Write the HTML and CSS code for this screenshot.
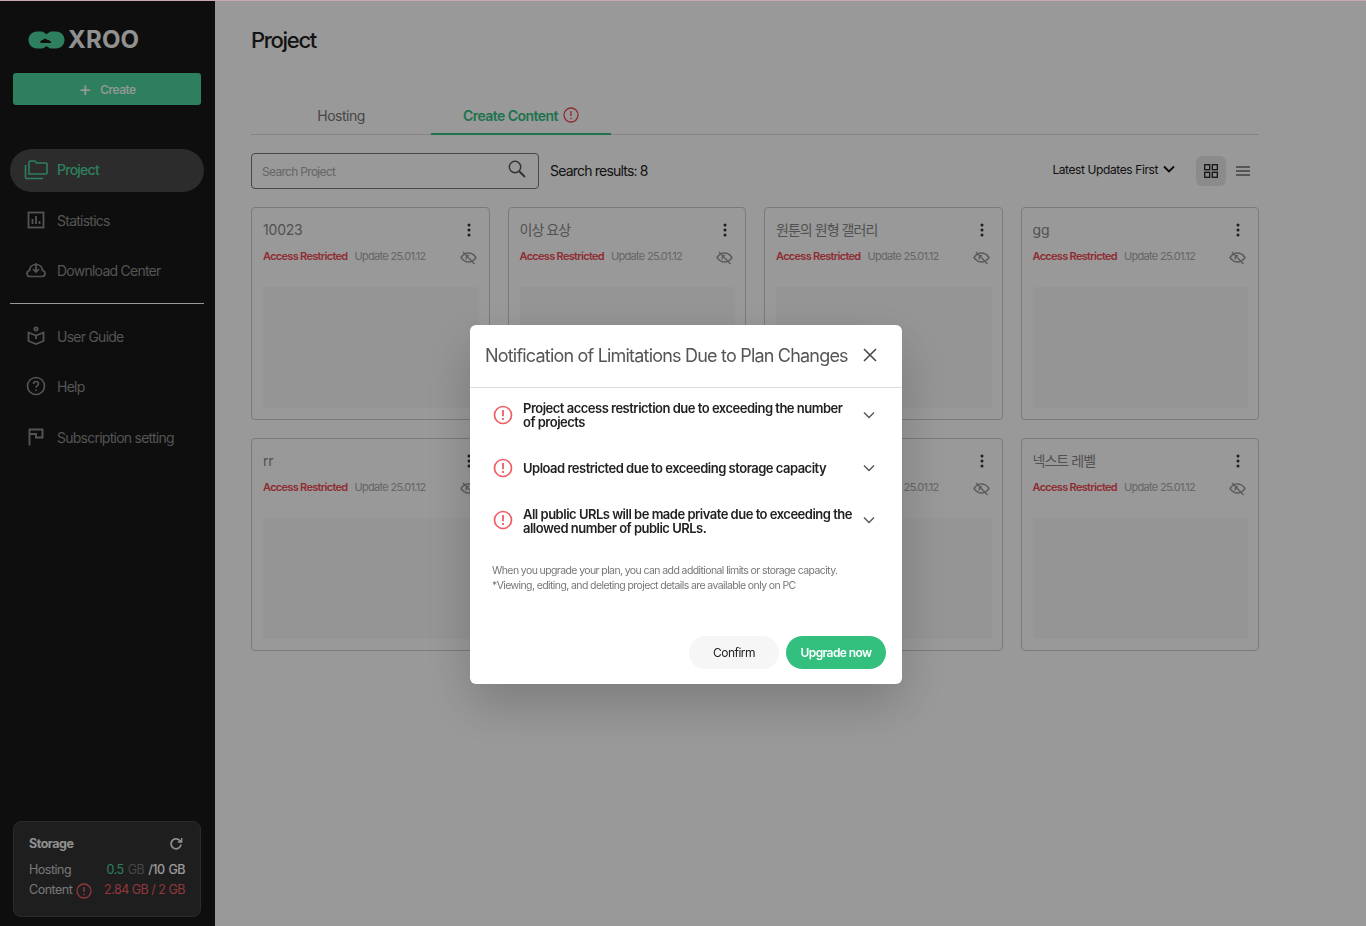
FILE: index.html
```html
<!DOCTYPE html>
<html lang="en">
<head>
    <meta charset="UTF-8">
    <meta name="viewport" content="width=device-width, initial-scale=1.0">
    <title>XROO - Project</title>
    <link rel="stylesheet" href="styles.css">
</head>
<body>
    <div class="app">
        <aside class="sidebar">
            <div class="logo">
                <svg class="logo-mark" width="37" height="18" viewBox="0 0 37 18">
                    <path d="M9 0.500H14C16 0.500 16.800 3 18.500 3C20.200 3 21 0.500 23 0.500H28C33 0.500 36.500 4.500 36.500 9C36.500 13.500 33 17.500 28 17.500H23C21 17.500 20.200 15.500 18.500 15.500C16.800 15.500 16 17.500 14 17.500H9C4 17.500 0.500 13.500 0.500 9C0.500 4.500 4 0.500 9 0.500Z" fill="#4dd49b"/>
                    <path d="M13.500 12C12 12 11.800 10.300 13 9.800C13.300 9 14.300 8.800 14.900 9.200C15.700 7.300 18.500 7.300 19.300 9.100C20.500 8.700 21.700 9.300 21.800 10.200C23.500 10.200 23.800 12 22.500 12Z" fill="#181818"/>
                </svg>
                <span class="logo-text">XROO</span>
            </div>
            <button class="create-btn"><span class="plus">+</span>Create</button>

            <nav class="nav">
                <a class="nav-item active">
                    <svg width="24" height="20" viewBox="0 0 24 20" fill="none" stroke="currentColor" stroke-width="1.600"><path d="M5 5V2.500C5 1.500 5.500 1 6.500 1H11L12.500 3H22C22.800 3 23 3.500 23 4V13C23 13.800 22.500 14 22 14H5Z"/><path d="M1.500 5V17.500C1.500 18 2 18.500 2.500 18.500H19"/></svg>
                    Project
                </a>
                <a class="nav-item">
                    <svg width="18" height="18" viewBox="0 0 18 18" fill="none" stroke="currentColor" stroke-width="1.800"><rect x="1.500" y="1.500" width="15" height="15"/><path d="M5.500 13V8M9 13V5M12.500 13V10"/></svg>
                    Statistics
                </a>
                <a class="nav-item">
                    <svg width="20" height="18" viewBox="0 0 20 18" fill="none" stroke="currentColor" stroke-width="1.700"><path d="M5 15.500H4C2 15.500 1 14 1 12.500C1 11 2 9.800 3.500 9.500C3.800 6 6.500 3.500 10 3.500C13.500 3.500 16.200 6 16.500 9.500C18 9.800 19 11 19 12.500C19 14 18 15.500 16 15.500Z"/><path d="M10 2V10.500M7 8L10 11L13 8"/></svg>
                    Download Center
                </a>
                <div class="nav-divider"></div>
                <a class="nav-item">
                    <svg width="18" height="20" viewBox="0 0 18 20" fill="none" stroke="currentColor" stroke-width="1.800"><circle cx="9" cy="3" r="1.700"/><path d="M1.500 6.500L9 9.500L16.500 6.500V15L9 18L1.500 15Z"/><path d="M9 9.500V13"/></svg>
                    User Guide
                </a>
                <a class="nav-item">
                    <svg width="20" height="20" viewBox="0 0 20 20" fill="none" stroke="currentColor" stroke-width="1.600"><circle cx="10" cy="10" r="8.500"/><path d="M7.500 8C7.500 6.500 8.600 5.500 10 5.500C11.500 5.500 12.500 6.500 12.500 7.800C12.500 9.500 10 9.800 10 11.800"/><path d="M10 13.500V15"/></svg>
                    Help
                </a>
                <a class="nav-item">
                    <svg width="16" height="18" viewBox="0 0 16 18" fill="none" stroke="currentColor" stroke-width="1.900"><path d="M1.500 17.500V1.500H14.500V9.500H8V6H1.500"/></svg>
                    Subscription setting
                </a>
            </nav>

            <div class="storage">
                <div class="storage-head">
                    <span>Storage</span>
                    <svg width="14" height="14" viewBox="0 0 14 14" fill="none" stroke="currentColor" stroke-width="1.800"><path d="M12 7.500A5 5 0 1 1 10.500 3.200L12.500 4.800"/><path d="M12.700 1V5H8.800" stroke-width="1.400"/></svg>
                </div>
                <div class="storage-row">
                    <span>Hosting</span>
                    <span class="storage-val"><em class="green">0.5</em> <em class="dim">GB</em> <b>/10 GB</b></span>
                </div>
                <div class="storage-row">
                    <span class="storage-label">Content
                        <svg class="warn-icon" width="16" height="16" viewBox="0 0 16 16"><circle cx="8" cy="8" r="7" fill="none" stroke="currentColor" stroke-width="1.300"/><path d="M8 4V9M8 10.800V12.300" stroke="currentColor" stroke-width="1.400"/></svg>
                    </span>
                    <span class="storage-val red"><em>2.84</em> <em>GB</em> / 2 GB</span>
                </div>
            </div>
        </aside>

        <main class="main">
            <h1 class="page-title">Project</h1>
            <div class="tabs">
                <div class="tab">Hosting</div>
                <div class="tab active">Create Content
                    <svg class="warn-icon" width="16" height="16" viewBox="0 0 16 16"><circle cx="8" cy="8" r="7" fill="none" stroke="currentColor" stroke-width="1.300"/><path d="M8 4V9M8 10.800V12.300" stroke="currentColor" stroke-width="1.400"/></svg>
                </div>
            </div>

            <div class="toolbar">
                <div class="search">
                    <span>Search Project</span>
                    <svg width="18" height="18" viewBox="0 0 18 18" fill="none" stroke="#555" stroke-width="1.500"><circle cx="7" cy="7" r="5.700"/><path d="M11.200 11.200L17 17" stroke-width="2"/></svg>
                </div>
                <div class="result-count">Search results: 8</div>
                <div class="sort">Latest Updates First
                    <svg width="12" height="8" viewBox="0 0 12 8" fill="none" stroke="#111" stroke-width="1.800"><path d="M1 1.500L6 6.500L11 1.500"/></svg>
                </div>
                <div class="view-btn selected">
                    <svg width="14" height="14" viewBox="0 0 14 14" fill="none" stroke="#222" stroke-width="1.300"><rect x="0.700" y="0.700" width="5" height="5"/><rect x="8.300" y="0.700" width="5" height="5"/><rect x="0.700" y="8.300" width="5" height="5"/><rect x="8.300" y="8.300" width="5" height="5"/></svg>
                </div>
                <div class="view-btn">
                    <svg width="14" height="10" viewBox="0 0 14 10" fill="none" stroke="#222" stroke-width="1.200"><path d="M0 1H14M0 5H14M0 9H14"/></svg>
                </div>
            </div>

            <div class="card-grid" id="cardGrid"></div>
        </main>
    </div>

    <div class="overlay">
        <div class="modal">
            <div class="modal-head">
                <span>Notification of Limitations Due to Plan Changes</span>
                <svg width="14" height="14" viewBox="0 0 14 14" fill="none" stroke="#444" stroke-width="1.500"><path d="M1 1L13 13M13 1L1 13"/></svg>
            </div>
            <div class="modal-body">
                <div class="notice">
                    <svg class="notice-icon" width="20" height="20" viewBox="0 0 20 20"><circle cx="10" cy="10" r="8.500" fill="none" stroke="currentColor" stroke-width="1.700"/><path d="M10 5V11.200M10 13V15" stroke="currentColor" stroke-width="1.800"/></svg>
                    <div class="notice-text">Project access restriction due to exceeding the number of projects</div>
                    <svg class="notice-arrow" width="12" height="8" viewBox="0 0 12 8" fill="none" stroke="#555" stroke-width="1.400"><path d="M1 1.500L6 6.500L11 1.500"/></svg>
                </div>
                <div class="notice">
                    <svg class="notice-icon" width="20" height="20" viewBox="0 0 20 20"><circle cx="10" cy="10" r="8.500" fill="none" stroke="currentColor" stroke-width="1.700"/><path d="M10 5V11.200M10 13V15" stroke="currentColor" stroke-width="1.800"/></svg>
                    <div class="notice-text">Upload restricted due to exceeding storage capacity</div>
                    <svg class="notice-arrow" width="12" height="8" viewBox="0 0 12 8" fill="none" stroke="#555" stroke-width="1.400"><path d="M1 1.500L6 6.500L11 1.500"/></svg>
                </div>
                <div class="notice">
                    <svg class="notice-icon" width="20" height="20" viewBox="0 0 20 20"><circle cx="10" cy="10" r="8.500" fill="none" stroke="currentColor" stroke-width="1.700"/><path d="M10 5V11.200M10 13V15" stroke="currentColor" stroke-width="1.800"/></svg>
                    <div class="notice-text">All public URLs will be made private due to exceeding the allowed number of public URLs.</div>
                    <svg class="notice-arrow" width="12" height="8" viewBox="0 0 12 8" fill="none" stroke="#555" stroke-width="1.400"><path d="M1 1.500L6 6.500L11 1.500"/></svg>
                </div>
                <p class="modal-note">When you upgrade your plan, you can add additional limits or storage capacity.<br>*Viewing, editing, and deleting project details are available only on PC</p>
            </div>
            <div class="modal-foot">
                <button class="btn-confirm">Confirm</button>
                <button class="btn-upgrade">Upgrade now</button>
            </div>
        </div>
    </div>

    <script>
        // project cards, the two in the middle of row 2 sit behind the modal
        let titles = ['10023', '이상 요상', '원툰의 원형 갤러리', 'gg', 'rr', '', '', '넥스트 레벨'];
        let html = '';
        for (let i = 0; i < titles.length; i++) {
            let cls = /[가-힣]/.test(titles[i]) ? 'card-title ko' : 'card-title';
            html += `
                <div class="card">
                    <div class="card-top">
                        <div class="${cls}">${titles[i]}</div>
                        <svg class="kebab" width="4" height="14" viewBox="0 0 4 14" fill="#333"><circle cx="2" cy="2" r="1.500"/><circle cx="2" cy="7" r="1.500"/><circle cx="2" cy="12" r="1.500"/></svg>
                    </div>
                    <div class="card-meta">
                        <span class="restricted">Access Restricted</span>
                        <span class="updated">Update 25.01.12</span>
                        <svg class="eye-off" width="17" height="14" viewBox="0 0 17 14" fill="none" stroke="#999" stroke-width="1.400"><path d="M1 6.500C3 3.500 5.500 2 8.500 2C11.500 2 14 3.500 16 6.500C14 9.500 11.500 11 8.500 11C5.500 11 3 9.500 1 6.500Z"/><path d="M6.500 8.500C5.500 6.800 6.500 4.500 9 4.500"/><path d="M3 1L14.500 13"/></svg>
                    </div>
                    <div class="card-thumb"></div>
                </div>`;
        }
        document.getElementById('cardGrid').innerHTML = html;
    </script>
</body>
</html>
```

FILE: styles.css
```css
* { box-sizing: border-box; }
body { margin: 0; height: 926px; overflow: hidden; font-family: Inter, "Noto Sans CJK KR", sans-serif; background: #fff; color: #222; letter-spacing: -0.5px; }
button { font-family: inherit; letter-spacing: inherit; border: none; cursor: pointer; }
svg { display: block; flex-shrink: 0; }
em { font-style: normal; }

.app { display: flex; height: 926px; }

/* sidebar */
.sidebar { width: 215px; flex-shrink: 0; background: #181818; display: flex; flex-direction: column; padding: 30px 11px 9px 10px; color: #8a8a8a; }
.logo { display: flex; align-items: center; gap: 3px; padding-left: 18px; height: 19px; }
.logo-text { color: #f2f2f2; font-size: 24px; font-weight: 700; letter-spacing: 0.2px; line-height: 19px; }
.create-btn { margin: 24px 3px 0 3px; height: 32px; width: 188px; background: #4dd49b; color: #fff; border-radius: 3px; font-size: 12px; font-weight: 500; letter-spacing: -0.5px; display: flex; align-items: center; justify-content: center; gap: 9px; }
.plus { font-size: 20px; font-weight: 400; line-height: 18px; }

.nav { margin-top: 44px; display: flex; flex-direction: column; }
.nav-item { height: 50px; display: flex; align-items: center; gap: 11px; padding: 0 0 2px 16px; font-size: 14px; letter-spacing: -0.75px; color: #8c8c8c; }
.nav-item svg { width: 20px; }
.nav-item.active { height: 43px; border-radius: 22px; background: #4a4a4a; color: #4dd49b; padding-left: 14px; margin-bottom: 4px; gap: 9px; font-weight: 500; }
.nav-item.active svg { width: 24px; }
.nav-item:last-child { margin-top: 1px; }
.nav-divider { height: 1px; background: #fff; margin: 7px 0 8px 0; }

.storage { margin: auto 3px 0 3px; height: 96px; width: 188px; background: #323232; border: 1px solid #484848; border-radius: 8px; padding: 13px 15px; font-size: 12.500px; color: #c8c8c8; }
.storage-head { display: flex; justify-content: space-between; align-items: center; font-weight: 700; color: #eee; margin-bottom: 8px; height: 16px; padding-right: 2px; }
.storage-head svg { margin-top: 1px; }
.storage-row { display: flex; justify-content: space-between; align-items: center; height: 20px; }
.storage-label { display: flex; align-items: center; gap: 4px; }
.storage-val { color: #ddd; font-size: 12.500px; word-spacing: 1px; }
.storage-val b { font-weight: 500; color: #fff; }
.green { color: #4dd49b; }
.dim { color: #777; }
.storage-val.red { color: #ef5d66; word-spacing: 0; }
.storage .warn-icon { color: #ef5d66; margin-top: 3px; }

/* main */
.main { flex: 1; padding: 0 107px 0 36px; }
.page-title { margin: 26px 0 0 0; font-size: 22px; font-weight: 500; line-height: 28px; letter-spacing: -1.3px; color: #222; }
.tabs { margin-top: 35px; display: flex; height: 46px; border-bottom: 1px solid #ddd; }
.tab { width: 180px; height: 46px; display: flex; align-items: center; justify-content: center; gap: 5px; font-size: 14px; color: #777; padding-top: 6px; }
.tab.active { color: #33c07f; font-weight: 600; border-bottom: 2px solid #33c07f; padding-top: 8px; letter-spacing: -0.55px; }
.tab .warn-icon { color: #ef4b55; }

.toolbar { margin-top: 18px; display: flex; align-items: center; height: 36px; }
.search { width: 288px; height: 36px; border: 1px solid #777; border-radius: 4px; display: flex; align-items: center; justify-content: space-between; padding: 0 12px 0 10px; font-size: 12px; letter-spacing: -0.7px; color: #aaa; }
.search svg { margin-top: -4px; }
.result-count { margin: 0 0 2px 11px; font-size: 14px; letter-spacing: -0.8px; color: #222; }
.sort { margin-left: auto; display: flex; align-items: center; gap: 5px; font-size: 12px; letter-spacing: -0.4px; color: #222; margin-top: -4px; }
.view-btn { width: 30px; height: 30px; display: flex; align-items: center; justify-content: center; border-radius: 6px; margin-left: 2px; }
.view-btn.selected { background: #e8e8e8; margin-left: 21px; }
.view-btn:last-child { margin-right: 1px; }

.card-grid { margin-top: 18px; display: grid; grid-template-columns: repeat(4, 1fr); gap: 18px; }
.card { height: 213px; border: 1px solid #ccc; border-radius: 4px; padding: 11px 10px 11px 11px; background: #fff; }
.card-top { display: flex; justify-content: space-between; align-items: center; height: 20px; padding-right: 8px; }
.kebab { margin-top: 2px; }
.card-title { font-size: 14px; color: #888; letter-spacing: -0.2px; }
.card-title.ko { letter-spacing: -0.95px; }
.card-meta { margin-top: 9px; display: flex; align-items: center; font-size: 11px; height: 16px; }
.restricted { color: #ef4b55; font-weight: 600; letter-spacing: -0.7px; }
.updated { color: #aaa; margin-left: 7px; letter-spacing: -0.7px; }
.eye-off { margin-left: auto; margin-right: 2px; margin-top: 4px; }
.card-thumb { margin-top: 23px; height: 121px; background: #f8f8f8; border-radius: 3px; }

/* modal */
.overlay { position: fixed; inset: 0; background: rgba(0, 0, 0, 0.4); border-top: 1px solid #c9a9b3; }
.modal { position: absolute; left: 470px; top: 324px; width: 432px; height: 359px; background: #fff; border-radius: 6px; box-shadow: 0 20px 50px rgba(0, 0, 0, 0.2); display: flex; flex-direction: column; }
.modal-head { height: 63px; padding: 0 25px 2px 15px; display: flex; align-items: center; justify-content: space-between; font-size: 18px; color: #555; border-bottom: 1px solid #ddd; letter-spacing: -0.8px; white-space: nowrap; }
.modal-body { flex: 1; padding: 0 22px; }
.notice { display: flex; align-items: center; }
.notice:nth-child(1) { height: 54px; }
.notice:nth-child(2) { height: 52px; }
.notice:nth-child(3) { height: 52px; }
.notice:nth-child(3) .notice-text { margin-top: 2px; }
.notice-icon { color: #ef5d66; margin-left: 1px; }
.notice-text { width: 332px; margin-left: 10px; font-size: 13px; font-weight: 600; line-height: 14px; color: #222; letter-spacing: -0.5px; }
.notice-arrow { margin-left: 8px; }
.modal-note { margin: 17px 0 0 0; font-size: 10.500px; line-height: 15px; color: #777; letter-spacing: -0.6px; }
.modal-foot { display: flex; justify-content: flex-end; gap: 7px; padding: 0 16px 15px 0; }
.btn-confirm, .btn-upgrade { height: 33px; border-radius: 17px; font-size: 12px; }
.btn-confirm { width: 90px; background: #f6f6f6; color: #222; font-weight: 400; }
.btn-upgrade { width: 100px; background: #33c07f; color: #fff; font-weight: 600; letter-spacing: -0.6px; }
```
